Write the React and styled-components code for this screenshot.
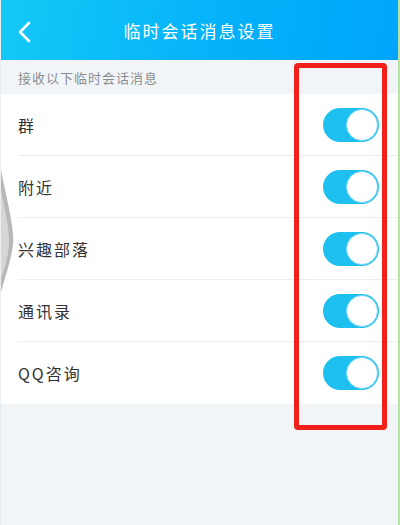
import React from "react";
import styled, { createGlobalStyle } from "styled-components";

const Global = createGlobalStyle`
  html, body { margin: 0; padding: 0; }
  body { background: #f2f5f8; font-family: "Noto Sans CJK SC", "Noto Sans", sans-serif; }
`;

const Page = styled.div`
  position: relative;
  width: 400px;
  height: 525px;
  box-sizing: border-box;
  background: #f2f5f8;
  border-right: 2px solid #b9e2a6;
  border-left: 1px solid #e8eef2;
  overflow: hidden;
`;

const Header = styled.header`
  height: 60px;
  display: flex;
  align-items: center;
  justify-content: center;
  position: relative;
  background: linear-gradient(100deg, #14c9f6 0%, #05b4f9 50%, #00a5fb 100%);
`;

const Back = styled.div`
  position: absolute;
  left: 16px;
  top: 21px;
  width: 16px;
  height: 22px;
  display: flex;
`;

const Title = styled.h1`
  margin: 0;
  font-size: 17px;
  font-weight: 400;
  color: #ffffff;
  letter-spacing: 2px;
`;

const SubHeader = styled.div`
  height: 34px;
  display: flex;
  align-items: center;
  padding-left: 17px;
  font-size: 13px;
  color: #8a8d90;
  letter-spacing: 1px;
`;

const List = styled.ul`
  list-style: none;
  margin: 0;
  padding: 0 0 0 17px;
  background: #ffffff;
`;

const Row = styled.li`
  height: 62px;
  display: flex;
  align-items: center;
  justify-content: space-between;
  padding-right: 19px;
  box-sizing: border-box;
  border-bottom: ${(p) => (p.$last ? "none" : "1px solid #ebeef0")};
`;

const Label = styled.span`
  font-size: 16px;
  color: #333333;
  letter-spacing: 2px;
`;

const Toggle = styled.div`
  width: 56px;
  height: 34px;
  border-radius: 17px;
  background: ${(p) => (p.$on ? "#1ec0f0" : "#dcdcdc")};
  display: flex;
  align-items: center;
  justify-content: ${(p) => (p.$on ? "flex-end" : "flex-start")};
  padding: 1px;
  box-sizing: border-box;
`;

const Knob = styled.div`
  width: 32px;
  height: 32px;
  border-radius: 50%;
  background: #ffffff;
  box-sizing: border-box;
  border: 1.5px solid #7fd7f2;
`;

const Highlight = styled.div`
  position: absolute;
  left: 293px;
  top: 63px;
  width: 93px;
  height: 367px;
  box-sizing: border-box;
  border: 5px solid #f2201a;
  border-radius: 4px;
  pointer-events: none;
`;

const Shadow = styled.svg`
  position: absolute;
  left: 0;
  top: 160px;
`;

const items = ["群", "附近", "兴趣部落", "通讯录", "QQ咨询"];

export default function App() {
  return (
    <Page>
      <Global />
      <Header>
        <Back>
          <svg width="16" height="22" viewBox="0 0 16 22">
            <path d="M12 2 L3 11 L12 20" fill="none" stroke="#ffffff" strokeWidth="2.6" strokeLinecap="round" strokeLinejoin="round" />
          </svg>
        </Back>
        <Title>临时会话消息设置</Title>
      </Header>
      <SubHeader>接收以下临时会话消息</SubHeader>
      <List>
        {items.map((t, i) => (
          <Row key={t} $last={i === items.length - 1}>
            <Label>{t}</Label>
            <Toggle $on>
              <Knob />
            </Toggle>
          </Row>
        ))}
      </List>
      <Shadow width="16" height="140" viewBox="0 0 16 140">
        <path d="M0 10 C 6 40, 14 70, 12 85 C 10 100, 4 118, 0 132 Z" fill="#b8b8b8" />
        <path d="M0 30 C 4 50, 9 72, 8 85 C 7 98, 3 110, 0 118 Z" fill="#d6d6d6" />
      </Shadow>
      <Highlight />
    </Page>
  );
}
